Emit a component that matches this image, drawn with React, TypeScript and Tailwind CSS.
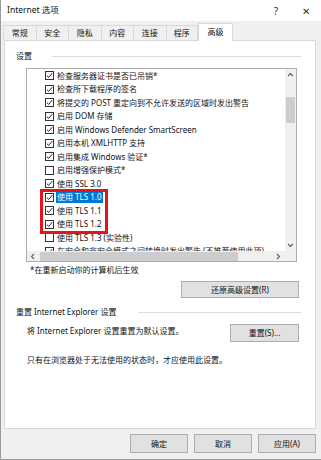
import React from "react";

const rows: { t: string; c: boolean; sel?: boolean }[] = [
  { t: "检查服务器证书是否已吊销*", c: true },
  { t: "检查所下载程序的签名", c: true },
  { t: "将提交的 POST 重定向到不允许发送的区域时发出警告", c: true },
  { t: "启用 DOM 存储", c: true },
  { t: "启用 Windows Defender SmartScreen", c: true },
  { t: "启用本机 XMLHTTP 支持", c: true },
  { t: "启用集成 Windows 验证*", c: true },
  { t: "启用增强保护模式*", c: false },
  { t: "使用 SSL 3.0", c: true },
  { t: "使用 TLS 1.0", c: true, sel: true },
  { t: "使用 TLS 1.1", c: true },
  { t: "使用 TLS 1.2", c: true },
  { t: "使用 TLS 1.3 (实验性)", c: false },
  { t: "在安全和非安全模式之间转换时发出警告 (不推荐使用此项)", c: true },
];

const tabs = ["常规", "安全", "隐私", "内容", "连接", "程序"];

function Check({ on }: { on: boolean }) {
  return (
    <div className="w-[9px] h-[9px] border border-[#333] bg-white flex items-center justify-center shrink-0">
      {on && (
        <svg width="7" height="7" viewBox="0 0 7 7">
          <path d="M0.8 3.6 L2.7 5.4 L6.2 1.2" fill="none" stroke="#222" strokeWidth="1" />
        </svg>
      )}
    </div>
  );
}

function Chevron({ dir }: { dir: "up" | "down" | "left" | "right" }) {
  const d =
    dir === "up"
      ? "M1 4 L3.5 1.5 L6 4"
      : dir === "down"
      ? "M1 2 L3.5 4.5 L6 2"
      : dir === "left"
      ? "M4 1 L1.5 3.5 L4 6"
      : "M2 1 L4.5 3.5 L2 6";
  return (
    <svg width="7" height="7" viewBox="0 0 7 7">
      <path d={d} fill="none" stroke="#606060" strokeWidth="1.1" />
    </svg>
  );
}

function Btn({ children, className = "" }: { children: React.ReactNode; className?: string }) {
  return (
    <div
      className={
        "bg-[#e1e1e1] border border-[#adadad] flex items-center justify-center " + className
      }
    >
      {children}
    </div>
  );
}

export default function App() {
  return (
    <div className="w-[321px] h-[460px] bg-[#f0f0f0] border-l border-b border-[#9a9a9a] flex flex-col text-[8px] leading-none text-[#111] font-['Noto_Sans','Noto_Sans_CJK_SC',sans-serif] overflow-hidden">
      {/* Title bar */}
      <div className="h-[21px] bg-white flex items-center shrink-0">
        <span className="pl-[6px] text-[8.5px]">Internet 选项</span>
        <span className="ml-auto w-[30px] text-center text-[10px] text-[#333]">?</span>
        <span className="w-[30px] text-center text-[10px] text-[#333]">✕</span>
      </div>

      {/* Tabs */}
      <div className="h-[19px] flex items-end pl-[2px] shrink-0">
        {tabs.map((t, i) => (
          <div
            key={t}
            className={
              "w-[32.5px] h-[15px] border-t border-l border-[#d9d9d9] bg-[#f0f0f0] flex items-center justify-center" +
              (i === tabs.length - 1 ? " border-r" : "")
            }
          >
            {t}
          </div>
        ))}
        <div className="relative z-10 w-[35px] h-[18px] -mb-px border-t border-l border-r border-[#d9d9d9] bg-white flex items-center justify-center pb-[2px]">
          高级
        </div>
      </div>

      {/* Panel */}
      <div className="ml-[3px] w-[312px] h-[389px] bg-white border border-[#d9d9d9] pl-[11px] pr-[14px] pt-[9px] flex flex-col shrink-0">
        <div className="h-[12px] flex items-center">
          <span>设置</span>
          <div className="flex-1 h-px bg-[#dcdcdc] ml-[20px]" />
        </div>

        {/* Listbox */}
        <div className="mt-[6px] ml-[10px] mr-[4px] h-[194px] border border-[#adadad] grid grid-cols-[1fr_11px] grid-rows-[1fr_10px]">
          <div className="relative overflow-hidden">
            {rows.map((r) => (
              <div key={r.t} className="h-[13.5px] flex items-center pl-[18px] whitespace-nowrap">
                <Check on={r.c} />
                <span
                  className={
                    r.sel
                      ? "ml-[2px] px-[1px] h-[12px] flex items-center bg-[#0078d7] text-white"
                      : "ml-[3px]"
                  }
                >
                  {r.t}
                </span>
              </div>
            ))}
            <div className="absolute left-[13px] top-[120px] w-[68px] h-[45px] border-[3px] border-[#e5141b]" />
          </div>

          {/* vertical scrollbar */}
          <div className="bg-[#f0f0f0] flex flex-col items-center">
            <div className="h-[12px] flex items-center justify-center">
              <Chevron dir="up" />
            </div>
            <div className="mt-[16px] w-[9px] h-[26px] bg-[#cdcdcd]" />
            <div className="mt-auto h-[12px] flex items-center justify-center">
              <Chevron dir="down" />
            </div>
          </div>

          {/* horizontal scrollbar */}
          <div className="bg-[#f0f0f0] flex items-center">
            <div className="w-[12px] flex items-center justify-center">
              <Chevron dir="left" />
            </div>
            <div className="ml-px w-[198px] h-[9px] bg-[#cdcdcd]" />
            <div className="ml-auto w-[13px] flex items-center justify-center">
              <Chevron dir="right" />
            </div>
          </div>
          <div className="bg-[#f0f0f0]" />
        </div>

        <div className="mt-[2px] pl-[14px] h-[12px] flex items-center">*在重新启动你的计算机后生效</div>

        <div className="mt-[5px] flex justify-end">
          <Btn className="w-[118px] h-[17px] mr-[2px]">还原高级设置(R)</Btn>
        </div>

        <div className="mt-[8px] h-[12px] flex items-center">
          <span>重置 Internet Explorer 设置</span>
          <div className="flex-1 h-px bg-[#dcdcdc] ml-[22px]" />
        </div>

        <div className="mt-[6px] flex items-start">
          <span className="pl-[11px] pt-[3px]">将 Internet Explorer 设置重置为默认设置。</span>
          <Btn className="ml-auto w-[69px] h-[18px] mr-[2px]">重置(S)...</Btn>
        </div>

        <div className="mt-[12px] pl-[11px] h-[12px] flex items-center">
          只有在浏览器处于无法使用的状态时，才应使用此设置。
        </div>
      </div>

      {/* Bottom buttons */}
      <div className="mt-[5px] flex justify-end gap-[6px] pr-[5px]">
        <Btn className="w-[58px] h-[19px] border-[#0078d7]">确定</Btn>
        <Btn className="w-[58px] h-[19px]">取消</Btn>
        <Btn className="w-[58px] h-[19px]">应用(A)</Btn>
      </div>
    </div>
  );
}
